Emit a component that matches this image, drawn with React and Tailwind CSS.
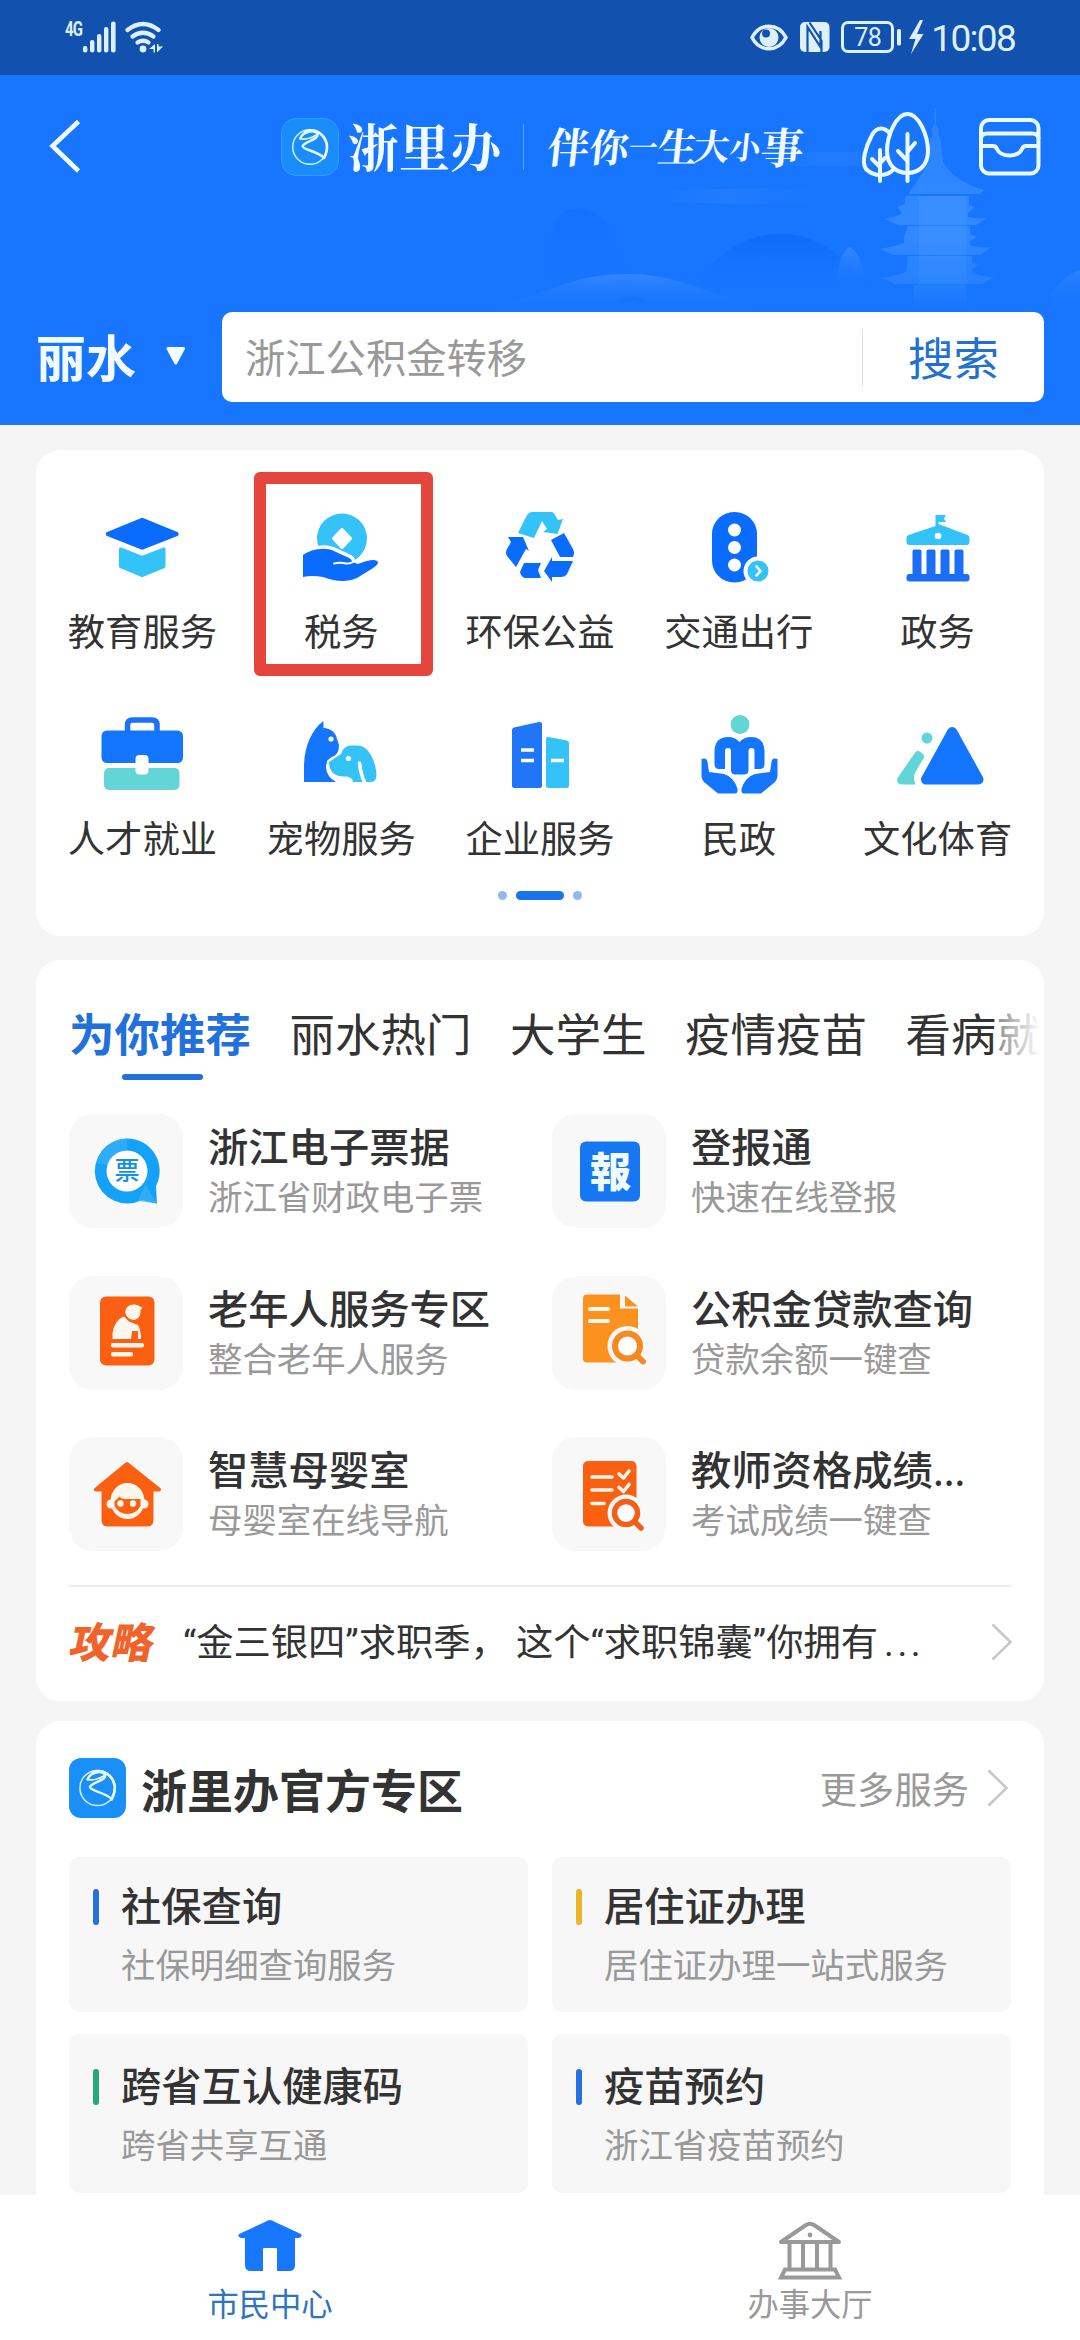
import React from "react";

const BLUE = "#0a6cff";
const SKY = "#34c3f8";
const TEAL = "#62d6d6";

function Art({ box, className, children }) {
  return (
    <svg viewBox={box} className={className} fill="none">
      {children}
    </svg>
  );
}

/* ---------- status bar ---------- */
function StatusBar() {
  return (
    <div className="flex h-[75px] shrink-0 items-start justify-between bg-[#1252ae] pl-[65px] pr-[65px] font-['Roboto',sans-serif] text-[#dcf0ff]">
      <div className="flex">
        <span className="mt-[19px] w-[17px] text-[20px] leading-[20px] font-bold tracking-[-1px] origin-left scale-x-75">4G</span>
        <Art box="82 18 84 38" className="mt-[18px] h-[38px] w-[84px]">
          <g fill="#dcf0ff">
            <rect x="83" y="46" width="4.4" height="6.5" rx="2" />
            <rect x="90" y="40" width="4.4" height="12.5" rx="2" />
            <rect x="97" y="34" width="4.4" height="18.5" rx="2" />
            <rect x="104" y="27" width="4.4" height="25.5" rx="2" />
            <rect x="111" y="21.500" width="4.600" height="31" rx="2" />
            <circle cx="143" cy="49" r="3.400" />
            <path d="M155 44v8.500h-1.500v-3.500h-4.500zM157 52.500v-8.500h1.500v2.500h4.500z" />
          </g>
          <g stroke="#dcf0ff" strokeWidth="4.200" strokeLinecap="round">
            <path d="M127.500 30q15.500-12 31 0" />
            <path d="M132.500 36.500q10.500-7.500 21 0" />
            <path d="M137.500 42.500q5.500-3.500 11 0" />
          </g>
        </Art>
      </div>
      <div className="flex">
        <Art box="748 18 84 38" className="mt-[18px] h-[38px] w-[84px]">
          <path d="M752 37.500C760 22.500 778 22.500 786 37.500C778 52.500 760 52.500 752 37.500Z" stroke="#dcf0ff" strokeWidth="3.600" strokeLinejoin="round" />
          <circle cx="769" cy="37.500" r="9.500" fill="#dcf0ff" />
          <circle cx="766" cy="33.500" r="4" fill="#1252ae" />
          <rect x="800" y="22" width="29.500" height="30" rx="5" fill="#dcf0ff" />
          <path d="M807.500 52V27l13 20V31M809.500 22.500l12 18V52" stroke="#1252ae" strokeWidth="2.200" />
        </Art>
        <div className="mt-[21px] ml-[9px] flex h-[32px] w-[53px] items-center justify-center rounded-[7px] border-[3px] border-[#dcf0ff] text-[25px] leading-none tracking-[-0.5px]">78</div>
        <Art box="895 18 32 38" className="mt-[18px] ml-px h-[38px] w-[32px]">
          <rect x="897" y="29" width="4" height="16.500" rx="1.500" fill="#dcf0ff" />
          <path d="M920 20L909 39H915.500L911 54L923.500 34H917L923 20Z" fill="#dcf0ff" />
        </Art>
        <span className="ml-[4px] mt-[18px] text-[37px] leading-[42px] tracking-[-1.700px]">10:08</span>
      </div>
    </div>
  );
}

/* Globe-like mark with a ribbon running through it */
function LogoMark({ className }) {
  return (
    <svg viewBox="0 0 60 60" className={className} fill="none">
      <circle cx="30" cy="30" r="18.500" stroke="#c9f2ff" strokeWidth="1.600" />
      <path d="M25 13.500C36 9 46 17 48 27C49 34 47 38 45 42" stroke="#eafcff" strokeWidth="2.800" strokeLinecap="round" />
      <path d="M19.500 21C22 13 35 11 38 16C40 22 24 24 22 29C22 33 37 34 45 41.500" stroke="#dff8ff" strokeWidth="2.600" strokeLinecap="round" strokeLinejoin="round" />
      <path d="M19.500 21Q27 23 37 17" stroke="#dff8ff" strokeWidth="1.800" />
    </svg>
  );
}

function Scenery() {
  return (
    <svg viewBox="0 75 1080 350" className="absolute inset-0 h-[350px] w-[1080px]" fill="none">
      <defs>
        <linearGradient id="dark" x1="0" y1="0" x2="0" y2="1">
          <stop offset="0" stopColor="#0a66f2" stopOpacity=".6" />
          <stop offset="1" stopColor="#1775ff" stopOpacity="0" />
        </linearGradient>
        <linearGradient id="light" x1="0" y1="0" x2="0" y2="1">
          <stop offset="0" stopColor="#4595ff" stopOpacity=".6" />
          <stop offset="1" stopColor="#1775ff" stopOpacity="0" />
        </linearGradient>
        <linearGradient id="cloud" x1="0" y1="0" x2="1" y2="0">
          <stop offset="0" stopColor="#2d84ff" stopOpacity="0" />
          <stop offset=".4" stopColor="#2d84ff" stopOpacity=".45" />
          <stop offset="1" stopColor="#2d84ff" stopOpacity="0" />
        </linearGradient>
        <linearGradient id="tower" gradientUnits="userSpaceOnUse" x1="0" y1="110" x2="0" y2="310">
          <stop offset="0" stopColor="#58a6ff" stopOpacity=".3" />
          <stop offset=".6" stopColor="#58a6ff" stopOpacity=".42" />
          <stop offset=".86" stopColor="#58a6ff" stopOpacity=".25" />
          <stop offset="1" stopColor="#58a6ff" stopOpacity="0" />
        </linearGradient>
      </defs>
      <path d="M655 192Q730 186 822 190V203Q740 206 655 201Z" fill="url(#cloud)" />
      <path d="M760 155Q860 148 930 156V166H760Z" fill="url(#cloud)" />
      <path d="M530 300C550 260 548 211 572 209Q590 206 602 218C622 240 620 280 660 300Z" fill="url(#dark)" opacity=".45" />
      <path d="M690 300C705 260 740 234 780 234S840 256 880 290Z" fill="url(#dark)" />
      <path d="M480 312C560 290 570 274 630 274C680 274 720 300 780 312Z" fill="url(#light)" />
      <path d="M605 312Q625 284 655 306L660 312Z" fill="url(#dark)" opacity=".5" />
      <path d="M1050 296Q1064 274 1080 270V312H1050Z" fill="url(#light)" opacity=".7" />
      <path d="M850 247C858 250 865 270 864 284Q858 294 850 294T837 284C836 268 842 250 850 247Z" fill="url(#light)" />
      <g fill="url(#tower)">
        <path d="M934.500 108h1.500V125Q940 129 938 134L940.500 140L943 162Q955 182 984 190L980 194H908L918 180L930 160L930 140L933 134Q930 129 934.500 125Z" />
        <path d="M905 196H969V205L975 207L968 213V217Q978 219 987 218L976 225H898L885 219Q896 217 902 213L897 207L905 204Z" />
        <path d="M908 226H970V234L977 237L970 241V245Q982 249 992 247L980 255H893L880 249Q896 246 904 243V237Z" />
        <path d="M908 256H972V263L980 265L972 269V273Q984 277 994 277L982 284H895L882 278Q896 276 906 272Z" />
        <path d="M914 285H966V312H914Z" />
        <path d="M919 196H966V285H919Z" opacity=".5" />
      </g>
    </svg>
  );
}

const slogan = [
  ["伴", "w-[42px] text-[42px]"],
  ["你", "w-[39px] text-[39px]"],
  ["一", "w-[29px] text-[29px]"],
  ["生", "w-[36px] text-[40px]"],
  ["大", "w-[36px] text-[36px]"],
  ["小", "w-[31px] text-[31px]"],
  ["事", "w-[40px] text-[43px]"],
];

function Header() {
  return (
    <header className="relative flex h-[350px] shrink-0 flex-col bg-[#1775ff]">
      <Scenery />
      <div className="relative flex h-[145px] items-start">
        <Art box="46 116 38 60" className="mt-[41px] ml-[46px] h-[60px] w-[38px]">
          <path d="M78.500 121.500L52.500 146L78.500 171" stroke="#f2fbff" strokeWidth="4.600" />
        </Art>
        <div className="mt-[43px] ml-[197px] h-[58px] w-[58px] rounded-[15px] border border-[#2f9dff] bg-[#1a8dfa]">
          <LogoMark className="h-[56px] w-[56px]" />
        </div>
        <span className="mt-[38px] ml-[9px] w-[154px] font-['Noto_Serif_CJK_SC','Noto_Sans_CJK_SC',serif] text-[51px] leading-[64px] font-bold text-[#f2fbff]">浙里办</span>
        <div className="mt-[49px] ml-[21px] h-[46px] w-px bg-[#5aa2ff]" />
        <div className="mt-[38px] ml-[24px] flex h-[64px] w-[256px] -skew-x-6 items-center font-['Noto_Serif_CJK_SC','Noto_Sans_CJK_SC',serif] leading-none font-bold text-[#f2fbff]">
          {slogan.map(([c, k]) => (
            <span key={c} className={k}>{c}</span>
          ))}
        </div>
        <Art box="858 108 76 80" className="mt-[33px] ml-[54px] h-[80px] w-[76px]">
          <g stroke="#e9fbff" strokeWidth="4" strokeLinecap="round" strokeLinejoin="round">
            <path d="M890 134C885 127 877 126 872 135C866 146 861 162 866 169Q872 175 880 175T893 170" />
            <path d="M907.500 114C919 114 928 136 928 151C928 165 919 173 907.500 173S887 165 887 151C887 136 896 114 907.500 114Z" />
            <path d="M880 150V181M880 167L872 159M880 163L885 158M907.500 134V181M907.500 161L898 151M907.500 152L915 143" />
          </g>
        </Art>
        <Art box="976 114 68 64" className="mt-[39px] ml-[42px] h-[64px] w-[68px]">
          <g stroke="#e9fbff" strokeWidth="4">
            <rect x="981" y="120" width="57.500" height="53.500" rx="8" />
            <path d="M981 139Q981 133.500 987 133.500H1032Q1038.500 133.500 1038.500 139M981 146H993Q996 146 997 149Q1000 155.500 1009.500 155.500T1022 149Q1023 146 1026 146H1038.500" />
          </g>
        </Art>
      </div>
      <div className="relative mt-[92px] flex h-[90px] items-center pl-[36px]">
        <span className="-mt-[5px] w-[104px] text-[50px] leading-[60px] font-bold text-[#f2fbff]">丽水</span>
        <Art box="162 343 28 28" className="ml-[22px] h-[28px] w-[28px]">
          <path d="M168 348.500H183.500L175.700 363Z" fill="#f2fbff" stroke="#f2fbff" strokeWidth="3" strokeLinejoin="round" />
        </Art>
        <div className="ml-[32px] flex h-[90px] w-[822px] items-center rounded-[10px] bg-white">
          <span className="-mt-[2px] w-[640px] pl-[23px] text-[40.300px] leading-[60px] text-[#999]">浙江公积金转移</span>
          <div className="h-[57px] w-px bg-[#ddd]" />
          <span className="-mt-[3px] flex-1 text-center text-[45.500px] leading-[60px] text-[#2271cd]">搜索</span>
        </div>
      </div>
    </header>
  );
}

/* ---------- service grid ---------- */
const services = [
  {
    label: "教育服务",
    box: "94.500 500 96 96",
    art: (
      <>
        <path d="M121 549L142.700 557.500L164.500 549V566.500L142.700 575.500L121 566.500Z" fill={SKY} stroke={SKY} strokeWidth="3" strokeLinejoin="round" />
        <path d="M108.500 534L142.700 520L177 534L142.700 547.500Z" fill={BLUE} stroke={BLUE} strokeWidth="4.500" strokeLinejoin="round" />
      </>
    ),
  },
  {
    label: "税务",
    box: "293 500 96 96",
    marked: true,
    art: (
      <>
        <circle cx="342" cy="538.500" r="25" fill={SKY} />
        <path d="M342 530L350 538.500L342 547L334 538.500Z" fill="#fff" stroke="#fff" strokeWidth="4" strokeLinejoin="round" />
        <path d="M303 555Q311 549.500 320 549Q329 548 336 552L347 557Q352 559 352 562L358 564Q368 560 373 560Q378 560 378 563Q377 566 370 570L357 578Q350 581.500 342 581Q334 581 323 577Q312 575 303 577Z" fill={BLUE} stroke="#fff" strokeWidth="7" paintOrder="stroke" strokeLinejoin="round" />
        <path d="M334 563.500Q340 562 346 563.500Q350 564 353 562" stroke="#fff" strokeWidth="2" strokeLinecap="round" />
      </>
    ),
  },
  {
    label: "环保公益",
    box: "492 500 96 96",
    art: (
      <>
        <path d="M518 533L527 515Q529 512 532 512H551Q554 512 555 515L558 520L563 519L557.500 534L543 532L547 529L542 521L534 538Z" fill={SKY} />
        <path d="M508 537H523L529 551L526 549L516 567L507 556Q505 553 507 549L511 542Z" fill={BLUE} />
        <path d="M520 572L524 563H541L538 570L541 578H525Q521 577 520 572Z" fill={BLUE} />
        <path d="M544 571L552 557V561H573L567 574Q565 577 561 577H552V582Z" fill={BLUE} />
        <path d="M551 540L564 533L573 549Q575 553 573 557H560Z" fill={BLUE} />
      </>
    ),
  },
  {
    label: "交通出行",
    box: "691 500 96 96",
    art: (
      <>
        <rect x="712" y="512" width="45" height="70.500" rx="22" fill={BLUE} />
        <circle cx="734.500" cy="530" r="6.500" fill="#fff" />
        <circle cx="734.500" cy="547.500" r="6.500" fill="#fff" />
        <circle cx="734.500" cy="565" r="6.500" fill="#fff" />
        <circle cx="758" cy="571" r="14.500" fill="#fff" />
        <circle cx="758" cy="571" r="10.500" fill={SKY} />
        <path d="M756.500 566.500L760.500 571L756.500 575.500" stroke="#fff" strokeWidth="2.600" strokeLinecap="round" strokeLinejoin="round" />
      </>
    ),
  },
  {
    label: "政务",
    box: "889.500 500 96 96",
    art: (
      <>
        <path d="M935 526V515H945.500L943.500 518.500L945.500 522H938V524L967 535Q969 536 969 538V542Q969 545 966 545H909Q906 545 906 542V538Q906 536 908 535Z" fill={SKY} />
        <circle cx="937.500" cy="536" r="3.300" fill="#fff" />
        <g fill="#1c6ff5">
          <rect x="912" y="549.500" width="9" height="28" rx="2" />
          <rect x="926" y="549.500" width="9" height="28" rx="2" />
          <rect x="940" y="549.500" width="9" height="28" rx="2" />
          <rect x="954" y="549.500" width="9" height="28" rx="2" />
          <rect x="906" y="574" width="63" height="7.500" rx="3" />
        </g>
      </>
    ),
  },
  {
    label: "人才就业",
    box: "94.500 707 96 96",
    art: (
      <>
        <path d="M128 733V725Q128 720 133 720H152.500Q157.500 720 157.500 725V733" stroke="#1c72f5" strokeWidth="5.500" />
        <rect x="102" y="730.500" width="81.500" height="32.500" rx="5.500" fill="#1475ff" />
        <rect x="104.500" y="768" width="75.500" height="22" rx="5" fill={TEAL} />
        <rect x="136" y="755" width="13" height="19.500" rx="4" fill="#fff" />
      </>
    ),
  },
  {
    label: "宠物服务",
    box: "293 707 96 96",
    art: (
      <>
        <path d="M304 782V767C304 748 311 730 323.500 721V728C331 728 336 733 337 739L339 745Q339 755 332 757Q326 760 326 768Q327 777 336 782Z" fill="#1475ff" />
        <path d="M329 762L341 754Q343 746 351 745.500H358C368 746 374 758 376 770Q378 782 371 782H353Q352 776 344 776.500Q329 776 329 762Z" fill={SKY} stroke="#fff" strokeWidth="4" paintOrder="stroke" />
        <path d="M359.500 763Q361 776 365 783" stroke="#fff" strokeWidth="3.500" strokeLinecap="round" />
        <circle cx="331" cy="739" r="2.600" fill="#fff" />
        <circle cx="348.500" cy="758.500" r="2.600" fill="#fff" />
      </>
    ),
  },
  {
    label: "企业服务",
    box: "492 707 96 96",
    art: (
      <>
        <path d="M512 730Q512 728 514 727.500L539 722Q542 721.500 542 724V785.500Q542 788 539.500 788H514.500Q512 788 512 785.500Z" fill="#1f76f8" />
        <path d="M521 750H534M521 760.500H534" stroke="#fff" strokeWidth="3.500" />
        <path d="M546 739Q546 736.500 548.500 737L567 740.500Q569 741 569 743V785.500Q569 788 566.500 788H548.500Q546 788 546 785.500Z" fill={SKY} />
        <path d="M551 760.500H564" stroke="#fff" strokeWidth="3.500" />
      </>
    ),
  },
  {
    label: "民政",
    box: "691 707 96 96",
    art: (
      <>
        <circle cx="740" cy="724.500" r="9.500" fill={TEAL} />
        <path d="M725 769H719Q714.500 769 714.500 764V751Q715 737 728 737Q735 737 739.500 742Q744 737 751 737Q764 737 764.500 751V764Q764.500 769 760 769H754.500V751Q754.500 748 751.500 748T748.500 751V770Q748.500 774.500 744 774.500H735.500Q731 774.500 731 770V751Q731 748 728 748T725 751Z" fill="#1475ff" />
        <path d="M701.500 759Q707 757 707.500 762L709 772L724 774Q734 777 737.500 789Q738 793.500 735 793.500H718L704 782Q701.500 779 701.500 776Z" fill="#1475ff" />
        <path d="M777.500 759Q772 757 771.500 762L770 772L755 774Q745 777 741.500 789Q741 793.500 744 793.500H761L775 782Q777.500 779 777.500 776Z" fill="#1475ff" />
      </>
    ),
  },
  {
    label: "文化体育",
    box: "889.500 707 96 96",
    art: (
      <>
        <circle cx="926.500" cy="738" r="5.500" fill={TEAL} />
        <path d="M915 752Q917 750 919 751.500L922.500 754Q924.500 756 923 758.500L915 772Q912 778 915 784.500H900Q895.500 783 897 778Z" fill={TEAL} />
        <path d="M951.700 732L925.500 779.500H978Z" fill="#1475ff" stroke="#1475ff" strokeWidth="10" strokeLinejoin="round" />
      </>
    ),
  },
];

function ServiceCard() {
  return (
    <section className="mx-9 mt-[25px] h-[486px] shrink-0 rounded-[24px] bg-white px-[7px] pt-[50px]">
      <div className="grid grid-cols-5 gap-y-[55px]">
        {services.map((s) => (
          <div key={s.label} className="relative flex flex-col items-center">
            <Art box={s.box} className="h-[96px] w-[96px]">{s.art}</Art>
            <span className="-mb-[2px] pt-[10px] text-[37.300px] leading-[48px] text-[#333]">{s.label}</span>
            {s.marked && <div className="absolute -top-[28px] left-[12px] h-[204px] w-[179px] rounded-[6px] border-[12px] border-[#e5463b]" />}
          </div>
        ))}
      </div>
      <div className="mt-[32px] flex justify-center gap-[9px]">
        <i className="h-[9px] w-[9px] rounded-full bg-[#91b9ec]" />
        <i className="h-[9px] w-[48px] rounded-full bg-[#1a73e8]" />
        <i className="h-[9px] w-[9px] rounded-full bg-[#91b9ec]" />
      </div>
    </section>
  );
}

/* ---------- recommendations ---------- */
const recs = [
  {
    title: "浙江电子票据",
    sub: "浙江省财政电子票",
    box: "69 1114 114 114",
    art: (
      <>
        <path d="M127 1138.500A32.500 32.500 0 1 0 142 1200L157 1203.500L156 1186A32.500 32.500 0 0 0 127 1138.500Z" fill="#14a2f8" />
        <path d="M127 1138.500Q104 1139 96 1163L108 1165Q112 1152 127 1150ZM145 1184L157 1203.500L138 1201Z" fill="#37b2fa" opacity=".7" />
        <circle cx="127" cy="1171" r="20.500" fill="#fff" />
        <text x="127" y="1180" textAnchor="middle" fontSize="25" fontWeight="500" fill="#1590e8">票</text>
      </>
    ),
  },
  {
    title: "登报通",
    sub: "快速在线登报",
    box: "552 1114 114 114",
    art: (
      <>
        <rect x="580" y="1141.500" width="60" height="60" rx="6" fill="#1677f3" />
        <text x="610.500" y="1187" textAnchor="middle" fontSize="41" fontWeight="900" fill="#f0fbff">報</text>
      </>
    ),
  },
  {
    title: "老年人服务专区",
    sub: "整合老年人服务",
    box: "69 1275.500 114 114",
    art: (
      <>
        <rect x="100" y="1296" width="54.500" height="69" rx="6" fill="#fb6012" />
        <g fill="#fff6ee">
          <path d="M125 1312Q126 1304 134 1304Q138 1304 142.500 1307.500L140.500 1309.500Q141 1318 134 1319.500Q127 1319 125 1312Z" />
          <path d="M112.500 1338.500Q111.500 1325 120 1318L124 1316L129 1321L138 1324.500Q141 1330 141 1338.500H138V1330.500H132L131 1338.500Z" />
          <rect x="111" y="1342.500" width="33" height="4.600" rx="2" />
          <rect x="111" y="1351.500" width="22" height="4.600" rx="2" />
        </g>
      </>
    ),
  },
  {
    title: "公积金贷款查询",
    sub: "贷款余额一键查",
    box: "552 1275.500 114 114",
    art: (
      <>
        <path d="M587 1294H620V1308H638V1362H587Q583 1362 583 1358V1298Q583 1294 587 1294ZM625 1295L638 1306H625Z" fill="#fb9220" />
        <path d="M590 1308.500H608M590 1320.500H608" stroke="#fff6ee" strokeWidth="4" strokeLinecap="round" />
        <circle cx="627.500" cy="1345.500" r="20" fill="#f8f8f8" />
        <circle cx="627.500" cy="1345.500" r="12.500" stroke="#f58a20" strokeWidth="6" fill="#fff" />
        <path d="M637 1355L643 1361" stroke="#f58a20" strokeWidth="6" strokeLinecap="round" />
      </>
    ),
  },
  {
    title: "智慧母婴室",
    sub: "母婴室在线导航",
    box: "69 1435 114 114",
    art: (
      <>
        <path d="M127 1462L96 1487.500H103.500V1518Q103.500 1522.500 108 1522.500H147Q151.500 1522.500 151.500 1518V1487.500H159Z" fill="#fb6012" stroke="#fb6012" strokeWidth="4" strokeLinejoin="round" />
        <g fill="#fff6ee">
          <circle cx="111" cy="1502" r="4.500" />
          <circle cx="144" cy="1502" r="4.500" />
          <ellipse cx="127.500" cy="1499" rx="17" ry="18" />
        </g>
        <path d="M114.500 1499Q117 1498 119.500 1494.500Q121 1497 125 1497H140.500V1504Q136 1512 127.500 1512T114.500 1504Z" fill="#fb6012" />
        <circle cx="120.500" cy="1501.500" r="3.200" fill="#fff6ee" />
        <circle cx="133" cy="1501.500" r="3.200" fill="#fff6ee" />
      </>
    ),
  },
  {
    title: "教师资格成绩",
    dots: true,
    sub: "考试成绩一键查",
    box: "552 1435 114 114",
    art: (
      <>
        <rect x="583" y="1459" width="53.500" height="65.500" rx="5" fill="#fb5f12" />
        <path d="M592 1475H612M592 1488H612M592 1501.500H604M619 1472L623.500 1476L629 1469M619 1485.500L623.500 1489.500L629 1482.500" stroke="#fff6ee" strokeWidth="3.600" strokeLinecap="round" strokeLinejoin="round" />
        <circle cx="626" cy="1511" r="18.500" fill="#f8f8f8" />
        <circle cx="626" cy="1511" r="11.500" stroke="#f26018" strokeWidth="5.500" fill="#fff" />
        <path d="M634.500 1519.500L641 1526" stroke="#f26018" strokeWidth="5.500" strokeLinecap="round" />
      </>
    ),
  },
];

function Chevron({ className }) {
  return (
    <svg viewBox="0 0 22 38" className={className} fill="none">
      <path d="M1.500 1.500L19.500 19L1.500 36.500" stroke="#c8c8c8" strokeWidth="2.600" />
    </svg>
  );
}

function RecommendCard() {
  return (
    <section className="mx-9 mt-[24px] flex h-[741px] shrink-0 flex-col rounded-[24px] bg-white pt-[32px]">
      <div className="relative ml-[33px] flex h-[88px] w-[971px] gap-[38.500px] overflow-hidden pt-[10px] text-[45.500px] leading-[60px] whitespace-nowrap text-[#333]">
        <div className="flex flex-col">
          <span className="font-bold text-[#2270dc]">为你推荐</span>
          <i className="mt-[12px] ml-[53px] h-[6px] w-[81px] shrink-0 rounded-full bg-[#2270d8]" />
        </div>
        <span>丽水热门</span>
        <span>大学生</span>
        <span>疫情疫苗</span>
        <span>看病就医</span>
        <div className="absolute top-0 right-0 h-full w-[46px] bg-gradient-to-r from-white/40 to-white" />
      </div>
      <div className="mt-[34px] ml-[33px] grid grid-cols-[483px_460px] gap-y-[47.500px]">
        {recs.map((r) => (
          <div key={r.title} className="flex h-[114px]">
            <div className="h-[114px] w-[114px] rounded-[24px] bg-[#f8f8f8]">
              <Art box={r.box} className="h-[114px] w-[114px]">{r.art}</Art>
            </div>
            <div className="ml-[25px] flex flex-col pt-[6px] whitespace-nowrap">
              <span className="text-[40.300px] leading-[50px] font-medium text-[#333]">
                {r.title}
                {r.dots && <span className="font-normal tracking-[-0.500px]">...</span>}
              </span>
              <span className="mt-[2px] text-[34.400px] leading-[46px] text-[#999]">{r.sub}</span>
            </div>
          </div>
        ))}
      </div>
      <div className="mx-[33px] mt-[34px] h-[2px] shrink-0 bg-[#eee]" />
      <div className="flex h-[109px] items-center pr-[31px] pl-[33px]">
        <span className="-mt-[3px] ml-[2px] w-[86px] -skew-x-12 text-[42px] leading-[60px] font-black text-[#f0642c]">攻略</span>
        <span className="mt-[3px] ml-[26px] flex-1 font-['Roboto','Noto_Sans_CJK_SC',sans-serif] text-[37.300px] leading-[60px] whitespace-nowrap text-[#333]">
          “金三银四”求职季<span className="mr-[8px]">，</span>这个“求职锦囊”你拥有<span className="ml-[6px] tracking-[3.500px]">...</span>
        </span>
        <Chevron className="h-[38px] w-[22px]" />
      </div>
    </section>
  );
}

/* ---------- official zone ---------- */
const zone = [
  { title: "社保查询", sub: "社保明细查询服务", bar: "bg-[#2a70d6]" },
  { title: "居住证办理", sub: "居住证办理一站式服务", bar: "bg-[#ecb428]" },
  { title: "跨省互认健康码", sub: "跨省共享互通", bar: "bg-[#2aa77c]", low: true },
  { title: "疫苗预约", sub: "浙江省疫苗预约", bar: "bg-[#2a70e0]", low: true },
];

function ZoneCard() {
  return (
    <section className="mx-9 mt-[20px] h-[560px] shrink-0 rounded-t-[24px] bg-white px-[33px] pt-[37px]">
      <div className="flex h-[60px] items-center">
        <div className="flex h-[60px] w-[57px] items-center justify-center rounded-[12px] bg-[#1a8ff8]">
          <LogoMark className="h-[60px] w-[60px]" />
        </div>
        <span className="ml-[15px] flex-1 text-[46px] leading-[60px] font-bold text-[#333]">浙里办官方专区</span>
        <span className="text-[37.300px] leading-[60px] text-[#999]">更多服务</span>
        <Chevron className="mr-[2px] ml-[18px] h-[38px] w-[22px]" />
      </div>
      <div className="mt-[39px] grid grid-cols-[459px_459px] gap-x-[24px] gap-y-[22px]">
        {zone.map((z) => (
          <div key={z.title} className={z.low ? "flex h-[159px] rounded-[10px] bg-[#f7f7f7] pt-[25px] pl-[24px]" : "flex h-[155px] rounded-[10px] bg-[#f7f7f7] pt-[22px] pl-[24px]"}>
            <i className={"mt-[10px] h-[36px] w-[6px] rounded-full " + z.bar} />
            <div className="ml-[22px] flex flex-col whitespace-nowrap">
              <span className="text-[40.300px] leading-[50px] font-medium text-[#333]">{z.title}</span>
              <span className="mt-[11px] text-[34.400px] leading-[46px] text-[#999]">{z.sub}</span>
            </div>
          </div>
        ))}
      </div>
    </section>
  );
}

function BottomNav() {
  return (
    <nav className="grid h-[145px] shrink-0 grid-cols-2 bg-white pt-[20px]">
      <div className="flex flex-col items-center">
        <Art box="236 2215 68 68" className="h-[68px] w-[68px]">
          <path d="M270 2220Q272 2220 275 2222L301 2234Q303 2237 299 2238H295V2265Q295 2271 289 2271H277V2249Q277 2248 276 2248H264Q263 2248 263 2249V2271H251Q245 2271 245 2265V2238H241Q237 2237 239 2234L265 2222Q268 2220 270 2220Z" fill="#1777ff" />
        </Art>
        <span className="text-[31.300px] leading-[40px] text-[#2f74bf]">市民中心</span>
      </div>
      <div className="flex flex-col items-center">
        <Art box="776 2215 68 68" className="h-[68px] w-[68px]">
          <g stroke="#999" strokeWidth="4">
            <path d="M781 2242L806 2225Q810 2222.500 814 2225L839 2242Z" strokeLinejoin="round" />
            <path d="M789.500 2243V2269M803 2243V2269M817 2243V2269M830.500 2243V2269" />
            <path d="M785 2269.500H835L839 2277.500H781Z" />
          </g>
          <circle cx="810" cy="2235" r="2.400" fill="#999" />
        </Art>
        <span className="text-[31.300px] leading-[40px] text-[#999]">办事大厅</span>
      </div>
    </nav>
  );
}

export default function App() {
  return (
    <div className="flex h-[2340px] w-[1080px] flex-col overflow-hidden bg-[#f5f5f5] font-['Noto_Sans_CJK_SC',sans-serif]">
      <StatusBar />
      <Header />
      <main className="flex min-h-0 flex-1 flex-col overflow-hidden">
        <ServiceCard />
        <RecommendCard />
        <ZoneCard />
      </main>
      <BottomNav />
    </div>
  );
}
